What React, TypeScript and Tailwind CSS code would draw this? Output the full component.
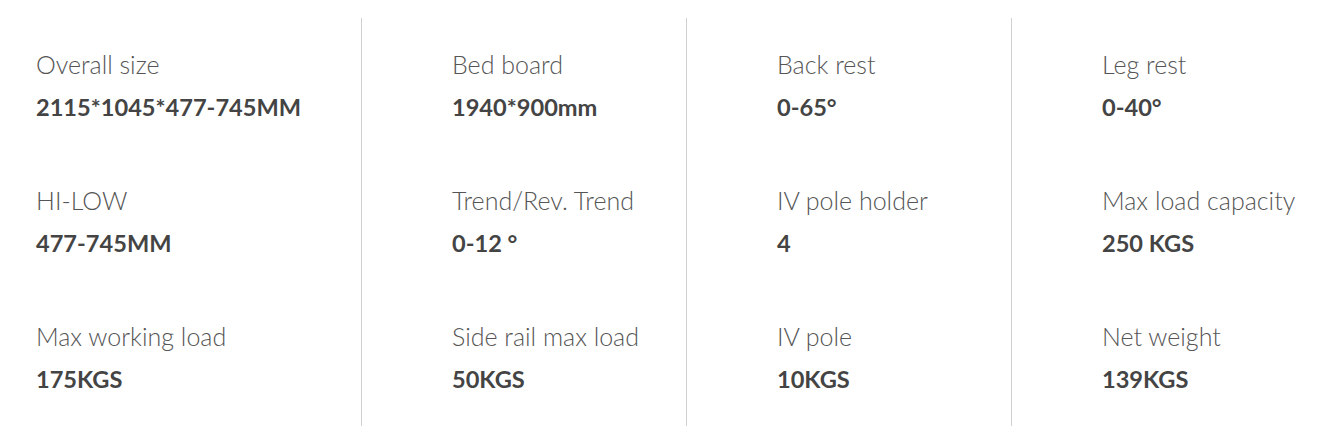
const specs = [
  [
    { label: 'Overall size', value: '2115*1045*477-745MM' },
    { label: 'HI-LOW', value: '477-745MM' },
    { label: 'Max working load', value: '175KGS' },
  ],
  [
    { label: 'Bed board', value: '1940*900mm' },
    { label: 'Trend/Rev. Trend', value: '0-12 °' },
    { label: 'Side rail max load', value: '50KGS' },
  ],
  [
    { label: 'Back rest', value: '0-65°' },
    { label: 'IV pole holder', value: '4' },
    { label: 'IV pole', value: '10KGS' },
  ],
  [
    { label: 'Leg rest', value: '0-40°' },
    { label: 'Max load capacity', value: '250 KGS' },
    { label: 'Net weight', value: '139KGS' },
  ],
];

export default function App() {
  return (
    <div className="w-[1331px] h-[432px] bg-white overflow-hidden font-['Lato',sans-serif]">
      <div className="flex pl-[36px] pt-[18px]">
        {specs.map((col, i) => (
          <div
            key={i}
            className={
              i === 0
                ? 'w-[325px] shrink-0 h-[408px]'
                : 'w-[325px] shrink-0 h-[408px] border-l border-[#d0d0d0] pl-[90px]'
            }
          >
            {col.map((item) => (
              <div key={item.label} className="h-[136px] pt-[32px]">
                <div className="text-[25px] leading-[28px] font-light text-[#555]">{item.label}</div>
                <div className="mt-[15px] text-[23.6px] leading-[28px] font-bold text-[#444]">{item.value}</div>
              </div>
            ))}
          </div>
        ))}
      </div>
    </div>
  );
}
